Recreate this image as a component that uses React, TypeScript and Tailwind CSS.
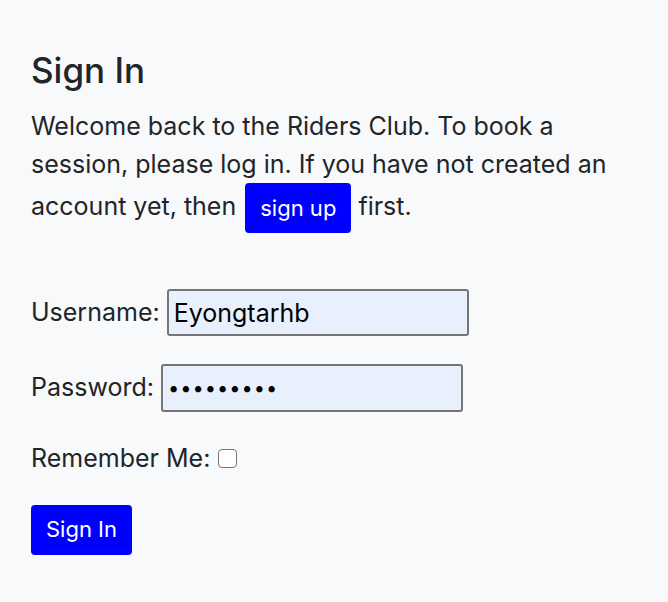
import React from 'react';

export default function App() {
  return (
    <div
      className="min-h-[602px] w-full bg-[#f8f9fa] text-[#212529] px-[31px] pt-[48px]"
      style={{ fontFamily: 'Inter, "Liberation Sans", sans-serif' }}
    >
      <h1 className="text-[35px] font-medium leading-[44px] mb-[15px]">Sign In</h1>
      <p className="text-[25px] leading-[38px] max-w-[600px]">
        Welcome back to the Riders Club. To book a session, please log in. If you have not created an
        account yet, then{' '}
        <a className="inline-block bg-[#0000ff] text-white rounded-[4px] px-[15px] ml-[2px] leading-[50px] text-[22px] align-middle">
          sign up
        </a>{' '}
        first.
      </p>

      <form className="mt-[56px] flex flex-col text-[25px]">
        <div className="flex items-center gap-[7px] h-[47px]">
          <label>Username:</label>
          <input
            defaultValue="Eyongtarhb"
            className="w-[302px] h-[47px] bg-[#e8f0fe] border-2 border-[#767676] rounded-[3px] px-[5px] text-black text-[25px] outline-none"
          />
        </div>
        <div className="flex items-center gap-[7px] h-[48px] mt-[28px]">
          <label>Password:</label>
          <input
            type="password"
            defaultValue="Eyongtarh"
            className="w-[302px] h-[48px] bg-[#e8f0fe] border-2 border-[#767676] rounded-[3px] px-[5px] text-black text-[20px] tracking-[1px] outline-none"
          />
        </div>
        <div className="flex items-center gap-[8px] mt-[28px]">
          <label>Remember Me:</label>
          <input
            type="checkbox"
            className="appearance-none w-[19px] h-[19px] bg-white border border-[#767676] rounded-[4px]"
          />
        </div>
        <div className="mt-[27px]">
          <button
            type="button"
            className="bg-[#0000ff] text-white rounded-[4px] w-[101px] h-[50px] text-[22px]"
          >
            Sign In
          </button>
        </div>
      </form>
    </div>
  );
}
